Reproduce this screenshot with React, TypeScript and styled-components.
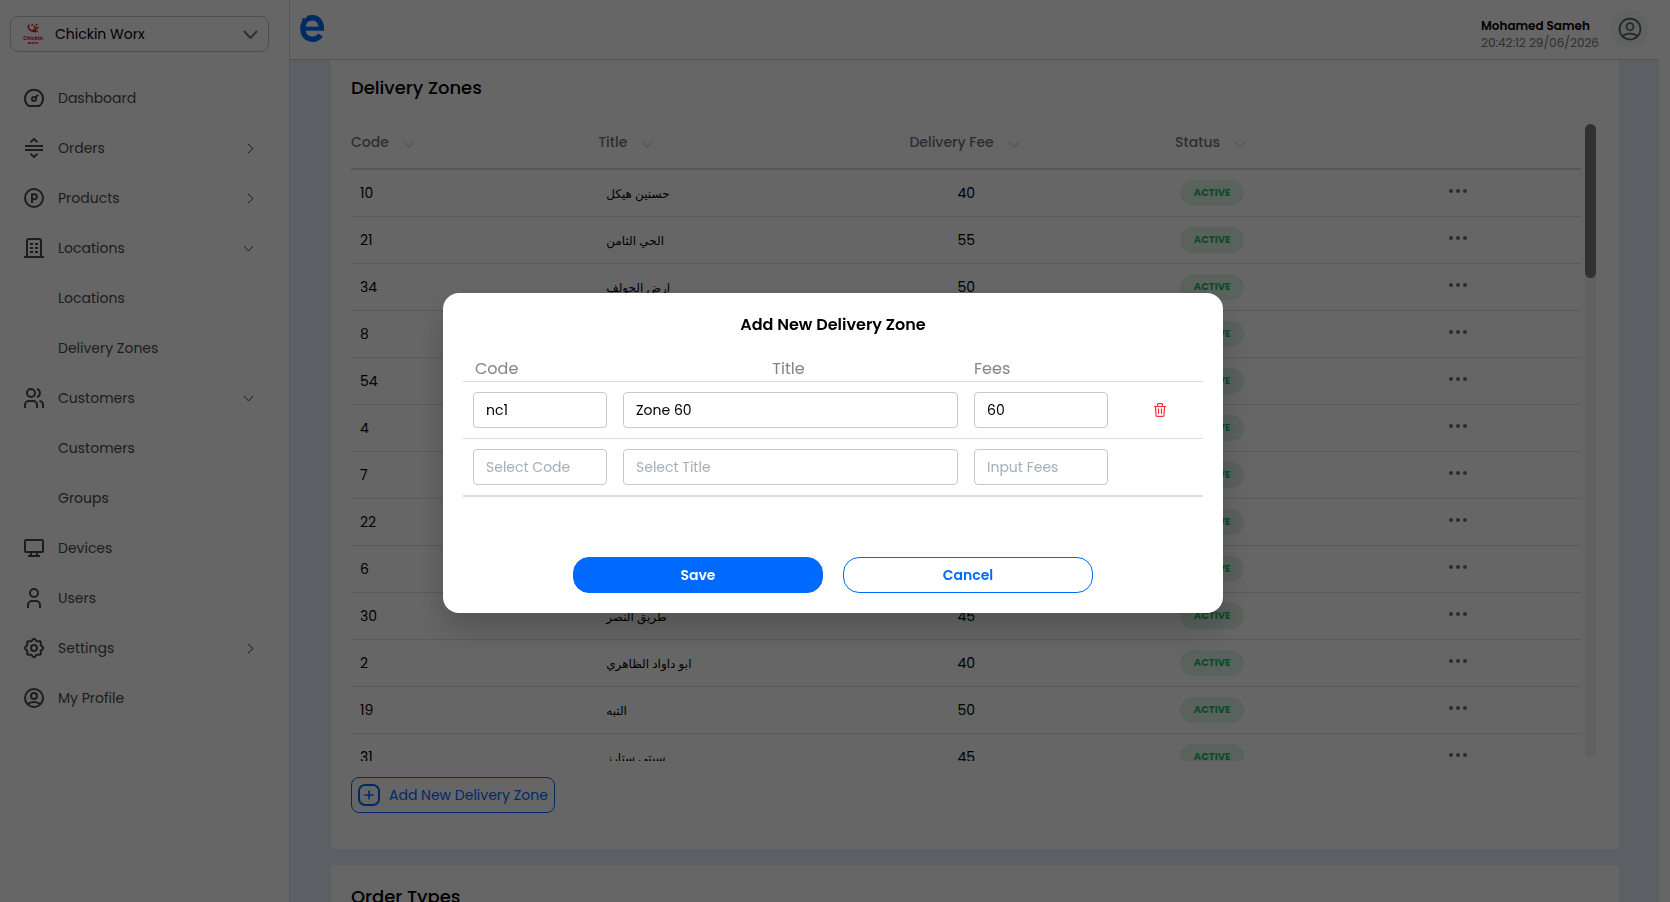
import React from "react";
import styled, { createGlobalStyle, css } from "styled-components";

const GlobalStyle = createGlobalStyle`
  *, *::before, *::after { box-sizing: border-box; }
  body {
    margin: 0;
    background: #fff;
    color: #000;
    font-family: Poppins, Inter, "DejaVu Sans", sans-serif;
    font-size: 14px;
    line-height: 24px;
  }
  button, input { font: inherit; color: inherit; }
  button { cursor: pointer; background: none; border: 0; padding: 0; }
  h1, h2, p, ul { margin: 0; padding: 0; }
`;

/* ---------- shell ---------- */

const Shell = styled.div`
  display: flex;
  height: 100vh;
  overflow: hidden;
`;

const Sidebar = styled.aside`
  flex: 0 0 290px;
  border-right: 1px solid #d0d5dc;
  padding: 16px 20px 0 10px;
`;

const StoreButton = styled.button`
  display: flex;
  align-items: center;
  width: 100%;
  height: 36px;
  padding: 0 10px 0 12px;
  border: 1px solid #c0c6d0;
  border-radius: 8px;
  text-align: left;
`;

const StoreName = styled.span`
  flex: 1;
  margin-left: 12px;
`;

const NavList = styled.ul`
  list-style: none;
  margin-top: 21px;
`;

const NavLink = styled.a`
  display: flex;
  align-items: center;
  height: 50px;
  padding: 0 15px 0 12px;
  color: #4a4a4a;
  text-decoration: none;
`;

const NavIcon = styled.span`
  display: flex;
  width: 24px;
  height: 24px;
  margin-right: 12px;
`;

const NavText = styled.span`
  flex: 1;
`;

const Main = styled.div`
  flex: 1;
  display: flex;
  flex-direction: column;
  min-width: 0;
  margin-right: 11px;
`;

const TopBar = styled.header`
  display: flex;
  flex: 0 0 60px;
  align-items: flex-start;
  padding: 10px 10px 0 8px;
  border-bottom: 1px solid #c8d0d4;
`;

const Brand = styled.a`
  flex: 1;
  display: flex;
  margin-top: 3px;
`;

const UserInfo = styled.div`
  width: 120px;
  margin: 7px 10px 0 0;
  font-size: 12px;
  white-space: nowrap;
`;

const UserName = styled.p`
  font-weight: 600;
  line-height: 18px;
`;

const Clock = styled.p`
  color: #6f767f;
  line-height: 16px;
`;

const Avatar = styled.button`
  display: flex;
  align-items: center;
  justify-content: center;
  width: 38px;
  height: 38px;
  border-radius: 50%;
  background: #f2f5f5;
  color: #5a6070;
`;

const Content = styled.main`
  flex: 1;
  min-height: 0;
  overflow: hidden;
  padding: 0 40px 0 41px;
  background: #e6eef8;
`;

const Card = styled.section<{ $joined?: boolean }>`
  padding: ${(p) => (p.$joined ? 16 : 20)}px 20px 35px;
  margin-bottom: 16px;
  background: #fff;
  border-radius: ${(p) => (p.$joined ? "0 0 4px 4px" : "4px")};
`;

const CardTitle = styled.h2`
  font-size: 18px;
  font-weight: 500;
  line-height: 24px;
`;

/* ---------- zones table ---------- */

const TableArea = styled.div`
  display: flex;
  gap: 4px;
  height: 645px;
  margin-top: 16px;
`;

const TableViewport = styled.div`
  flex: 1;
  overflow: hidden;
`;

const ScrollTrack = styled.div`
  width: 11px;
  height: 634px;
  margin: 8px 3px 0 0;
  border-radius: 6px;
  background: #f0f0f0;
`;

const ScrollThumb = styled.div`
  height: 154px;
  border-radius: 6px;
  background: #7a7a7a;
`;

const ZoneTable = styled.table`
  width: 100%;
  table-layout: fixed;
  border-collapse: separate;
  border-spacing: 0;
`;

const ZoneHead = styled.th<{ $width: string }>`
  width: ${(p) => p.$width};
  height: 54px;
  padding: 0;
  border-bottom: 2px solid #ccdcdc;
  color: #6c757d;
  font-weight: 500;
  text-align: left;
  white-space: nowrap;
`;

const SortButton = styled.button`
  display: inline-flex;
  align-items: center;
  gap: 14px;
  svg { margin-top: 4px; }
`;

const ZoneCell = styled.td<{ $indent: number }>`
  height: 47px;
  padding: 0 0 0 ${(p) => p.$indent}px;
  border-bottom: 1px solid #dadfe2;
  white-space: nowrap;
`;

const ArabicTitle = styled.span`
  font-size: 12px;
`;

const Badge = styled.span`
  display: block;
  width: 64px;
  height: 26px;
  margin-bottom: 1px;
  border-radius: 13px;
  background: #e2f5ea;
  color: #1fb95c;
  font-size: 10px;
  font-weight: 700;
  line-height: 26px;
  text-align: center;
`;

const MoreButton = styled.button`
  display: flex;
  margin: 0 auto;
  padding-bottom: 4px;
  color: #69737c;
`;

const AddButton = styled.button`
  display: inline-flex;
  align-items: center;
  gap: 8px;
  height: 36px;
  margin-top: 16px;
  padding: 0 6px 0 5px;
  border: 1px solid #006aff;
  border-radius: 8px;
  color: #006aff;
`;

/* ---------- dialog ---------- */

const Overlay = styled.div`
  position: fixed;
  inset: 0;
  display: flex;
  align-items: center;
  justify-content: center;
  padding: 4px 4px 0 0;
  background: rgba(0, 0, 0, 0.6);
`;

const Dialog = styled.form`
  width: 780px;
  padding: 20px;
  border-radius: 16px;
  background: #fff;
  box-shadow: 0 16px 32px rgba(0, 0, 0, 0.2);
`;

const DialogTitle = styled.h1`
  font-size: 16px;
  font-weight: 600;
  line-height: 24px;
  text-align: center;
`;

const EntryTable = styled.table`
  width: 100%;
  margin-top: 18px;
  table-layout: fixed;
  border-collapse: separate;
  border-spacing: 0;
`;

const EntryHead = styled.th<{ $width?: number; $first?: boolean; $center?: boolean }>`
  ${(p) => p.$width && css`width: ${p.$width}px;`}
  height: 27px;
  padding: 2px 12px 0 ${(p) => (p.$first ? 12 : 8)}px;
  border-bottom: 1px solid #d8dde2;
  color: #858585;
  font-size: 16px;
  font-weight: 400;
  line-height: 24px;
  text-align: ${(p) => (p.$center ? "center" : "left")};
`;

const EntryCell = styled.td<{ $last?: boolean; $first?: boolean }>`
  padding: 10px 8px 10px ${(p) => (p.$first ? 10 : 8)}px;
  border-bottom: ${(p) => (p.$last ? 2 : 1)}px solid #d8dfe5;
`;

const Field = styled.input`
  display: block;
  width: 100%;
  height: 36px;
  padding: 0 12px;
  border: 1px solid #c3cbd2;
  border-radius: 4px;
  background: #fff;
  outline: 0;
  &::placeholder { color: #a5afb8; opacity: 1; }
`;

const DeleteButton = styled.button`
  display: flex;
  margin: 0 auto;
`;

const Actions = styled.div`
  display: flex;
  justify-content: center;
  gap: 20px;
  margin-top: 60px;
`;

const ActionButton = styled.button<{ $primary?: boolean }>`
  width: 250px;
  height: 36px;
  border: 1px solid #006aff;
  border-radius: 16px;
  background: ${(p) => (p.$primary ? "#006aff" : "#fff")};
  color: ${(p) => (p.$primary ? "#fff" : "#006aff")};
  font-weight: 600;
`;

/* ---------- icons ---------- */

const Line = ({ children, size = 24, width = 2 }: { children: React.ReactNode; size?: number; width?: number }) => (
  <svg width={size} height={size} viewBox="0 0 24 24" fill="none" stroke="currentColor" strokeWidth={width} aria-hidden="true">
    {children}
  </svg>
);

const DashboardIcon = () => (
  <Line>
    <path d="M6.700 20A9 9 0 1 1 17.300 20Z" />
    <circle cx="12" cy="13" r="2" />
    <path d="M13.400 11.600l2.800-2.800" />
  </Line>
);

const ProductsIcon = () => (
  <Line>
    <circle cx="12" cy="12" r="9" />
    <path d="M10 17V8.200h2.400a2.500 2.500 0 0 1 0 5H10" />
  </Line>
);

const OrdersIcon = () => (
  <Line><path d="M3 10h18M3 14h18M8.500 6.200 12 3l3.500 3.200M8.500 17.800 12 21l3.500-3.200" /></Line>
);

const BuildingIcon = () => (
  <Line>
    <path d="M5 21V5a2 2 0 0 1 2-2h10a2 2 0 0 1 2 2v16M2 21h20" />
    <path d="M8 8h3M13 8h3M8 12h3M13 12h3M8 16h3M13 16h3" />
  </Line>
);

const GroupIcon = () => (
  <Line>
    <circle cx="9" cy="7" r="4" />
    <path d="M3 22v-3a4 4 0 0 1 4-4h4a4 4 0 0 1 4 4v3M15 3a4.200 4.200 0 0 1 0 8M17.500 15a4 4 0 0 1 3.500 4v3" />
  </Line>
);

const MonitorIcon = () => (
  <Line><path d="M4 4h16a1 1 0 0 1 1 1v10a1 1 0 0 1-1 1H4a1 1 0 0 1-1-1V5a1 1 0 0 1 1-1zM9 16v4M15 16v4M6 20h12" /></Line>
);

const PersonIcon = () => (
  <Line>
    <circle cx="12" cy="7" r="4" />
    <path d="M6 22v-3a4 4 0 0 1 4-4h4a4 4 0 0 1 4 4v3" />
  </Line>
);

const gearPath =
  Array.from({ length: 96 }, (_, i) => {
    const a = (i / 96) * Math.PI * 2;
    const r = 8.2 + 0.9 * Math.cos(8 * a);
    return `${i ? "L" : "M"}${(12 + r * Math.cos(a)).toFixed(2)} ${(12 + r * Math.sin(a)).toFixed(2)}`;
  }).join("") + "Z";

const GearIcon = () => (
  <Line>
    <path d={gearPath} />
    <circle cx="12" cy="12" r="3" />
  </Line>
);

const ProfileIcon = ({ size, width }: { size?: number; width?: number }) => (
  <Line size={size} width={width}>
    <circle cx="12" cy="12" r="9" />
    <circle cx="12" cy="10" r="3" />
    <path d="M5.500 18.300C7.200 16.600 9.400 16 12 16s4.800.6 6.500 2.300" />
  </Line>
);

const Chevron = ({ w, h, width, color }: { w: number; h: number; width: number; color: string }) => (
  <svg width={w + 2} height={h + 2} viewBox={`-1 -1 ${w + 2} ${h + 2}`} fill="none" stroke={color} strokeWidth={width} aria-hidden="true">
    <path d={w > h ? `M0 0 ${w / 2} ${h} ${w} 0` : `M0 0 ${w} ${h / 2} 0 ${h}`} />
  </svg>
);

const BrandLogo = () => (
  <svg width="28" height="30" viewBox="0 0 28 30" fill="none" stroke="#006aff" aria-hidden="true">
    <path d="M23.300 17C23.800 9 20 4.700 14.200 4.700S4.900 9 4.900 15.500 8.700 26.200 14.500 26.200c3.600 0 6.200-1.300 8-4.200" strokeWidth="5.400" />
    <path d="M6 15.700h20" strokeWidth="4" />
    <path d="M2 2l7.500 1.200L4 8.500z" fill="#fff" stroke="none" />
    <circle cx="5.500" cy="6.500" r="1.500" fill="#006aff" stroke="none" />
  </svg>
);

const StoreLogo = () => (
  <svg width="20" height="22" viewBox="0 0 20 22" aria-hidden="true">
    <path d="M6 1.500c-1.500 3 0 5 2 6S13.500 9.500 14.500 7.500M8.500 2.500 10 1M11 3l2 3 2.500-2M10 6.500l3 1.500M13.500 1v2" stroke="#e0162f" strokeWidth="1.500" fill="none" />
    <text x="10" y="17" textAnchor="middle" fontSize="5" fontWeight="700" fill="#e0162f">Chickin</text>
    <text x="10" y="21" textAnchor="middle" fontSize="4" fontWeight="700" fill="#e0162f">Worx</text>
  </svg>
);

const PlusSquareIcon = () => (
  <svg width="24" height="24" viewBox="0 0 24 24" fill="none" stroke="currentColor" aria-hidden="true">
    <rect x="2" y="2" width="20" height="20" rx="6" strokeWidth="2" />
    <path d="M12 7.500v9M7.500 12h9" strokeWidth="1.500" />
  </svg>
);

const DotsIcon = () => (
  <svg width="18" height="4" viewBox="0 0 18 4" fill="currentColor" aria-hidden="true">
    <circle cx="2" cy="2" r="2" /><circle cx="9" cy="2" r="2" /><circle cx="16" cy="2" r="2" />
  </svg>
);

const TrashIcon = () => (
  <svg width="12" height="14" viewBox="0 0 12 14" fill="none" stroke="#fb2f3a" strokeWidth="1.200" aria-hidden="true">
    <path d="M0 3.500h12M3.500 3V1.500q0-.8.8-.8h3.400q.8 0 .8.800V3M1.500 3.500 2 12.400q.1.900 1 .9h6q.9 0 1-.9l.5-8.900M4.500 5.500v5.500M7.500 5.500v5.500" />
  </svg>
);

/* ---------- data ---------- */

type NavEntry = { label: string; icon?: React.ReactNode; arrow?: "right" | "down" };

const nav: NavEntry[] = [
  { label: "Dashboard", icon: <DashboardIcon /> },
  { label: "Orders", icon: <OrdersIcon />, arrow: "right" },
  { label: "Products", icon: <ProductsIcon />, arrow: "right" },
  { label: "Locations", icon: <BuildingIcon />, arrow: "down" },
  { label: "Locations" },
  { label: "Delivery Zones" },
  { label: "Customers", icon: <GroupIcon />, arrow: "down" },
  { label: "Customers" },
  { label: "Groups" },
  { label: "Devices", icon: <MonitorIcon /> },
  { label: "Users", icon: <PersonIcon /> },
  { label: "Settings", icon: <GearIcon />, arrow: "right" },
  { label: "My Profile", icon: <ProfileIcon /> },
];

const columns = [
  { label: "Code", width: "20.1%" },
  { label: "Title", width: "25.3%" },
  { label: "Delivery Fee", width: "21.6%" },
  { label: "Status", width: "13%" },
];

const zones: [string, string, string][] = [
  ["10", "حسنين هيكل", "40"],
  ["21", "الحي الثامن", "55"],
  ["34", "ارض الجولف", "50"],
  ["8", "", ""],
  ["54", "", ""],
  ["4", "", ""],
  ["7", "", ""],
  ["22", "", ""],
  ["6", "", ""],
  ["30", "طريق النصر", "45"],
  ["2", "ابو داواد الظاهري", "40"],
  ["19", "التبه", "50"],
  ["31", "سيتي ستارز", "45"],
];

export default function App() {
  return (
    <>
      <GlobalStyle />
      <Shell>
        <Sidebar>
          <StoreButton type="button">
            <StoreLogo />
            <StoreName>Chickin Worx</StoreName>
            <Chevron w={13} h={7} width={2} color="#6c757d" />
          </StoreButton>
          <nav>
            <NavList>
              {nav.map((item, i) => (
                <li key={i}>
                  <NavLink href="#">
                    <NavIcon>{item.icon}</NavIcon>
                    <NavText>{item.label}</NavText>
                    {item.arrow === "right" && <Chevron w={5} h={9} width={1} color="#4a4a4a" />}
                    {item.arrow === "down" && <Chevron w={9} h={5} width={1} color="#4a4a4a" />}
                  </NavLink>
                </li>
              ))}
            </NavList>
          </nav>
        </Sidebar>
        <Main>
          <TopBar>
            <Brand href="#" aria-label="Home"><BrandLogo /></Brand>
            <UserInfo>
              <UserName>Mohamed Sameh</UserName>
              <Clock>20:42:12 29/06/2026</Clock>
            </UserInfo>
            <Avatar type="button" aria-label="Account"><ProfileIcon size={28} width={1.5} /></Avatar>
          </TopBar>
          <Content>
            <Card $joined>
              <CardTitle>Delivery Zones</CardTitle>
              <TableArea>
                <TableViewport>
                  <ZoneTable>
                    <thead>
                      <tr>
                        {columns.map((c) => (
                          <ZoneHead key={c.label} $width={c.width}>
                            <SortButton type="button">
                              {c.label}
                              <Chevron w={10} h={5} width={2} color="#dde1e4" />
                            </SortButton>
                          </ZoneHead>
                        ))}
                        <ZoneHead $width="20%" />
                      </tr>
                    </thead>
                    <tbody>
                      {zones.map(([code, title, fee]) => (
                        <tr key={code}>
                          <ZoneCell $indent={9}>{code}</ZoneCell>
                          <ZoneCell $indent={8}><ArabicTitle>{title}</ArabicTitle></ZoneCell>
                          <ZoneCell $indent={48}>{fee}</ZoneCell>
                          <ZoneCell $indent={5}><Badge>ACTIVE</Badge></ZoneCell>
                          <ZoneCell $indent={0}>
                            <MoreButton type="button" aria-label="More"><DotsIcon /></MoreButton>
                          </ZoneCell>
                        </tr>
                      ))}
                    </tbody>
                  </ZoneTable>
                </TableViewport>
                <ScrollTrack><ScrollThumb /></ScrollTrack>
              </TableArea>
              <AddButton type="button"><PlusSquareIcon />Add New Delivery Zone</AddButton>
            </Card>
            <Card>
              <CardTitle>Order Types</CardTitle>
            </Card>
          </Content>
        </Main>
      </Shell>
      <Overlay>
        <Dialog role="dialog" aria-labelledby="dialog-title" onSubmit={(e) => e.preventDefault()}>
          <DialogTitle id="dialog-title">Add New Delivery Zone</DialogTitle>
          <EntryTable>
            <thead>
              <tr>
                <EntryHead $width={152} $first>Code</EntryHead>
                <EntryHead $center>Title</EntryHead>
                <EntryHead $width={150}>Fees</EntryHead>
                <EntryHead $width={87} />
              </tr>
            </thead>
            <tbody>
              <tr>
                <EntryCell $first><Field aria-label="Code" defaultValue="nc1" /></EntryCell>
                <EntryCell><Field aria-label="Title" defaultValue="Zone 60" /></EntryCell>
                <EntryCell><Field aria-label="Fees" defaultValue="60" /></EntryCell>
                <EntryCell>
                  <DeleteButton type="button" aria-label="Delete row"><TrashIcon /></DeleteButton>
                </EntryCell>
              </tr>
              <tr>
                <EntryCell $first $last><Field aria-label="New code" placeholder="Select Code" /></EntryCell>
                <EntryCell $last><Field aria-label="New title" placeholder="Select Title" /></EntryCell>
                <EntryCell $last><Field aria-label="New fees" placeholder="Input Fees" /></EntryCell>
                <EntryCell $last />
              </tr>
            </tbody>
          </EntryTable>
          <Actions>
            <ActionButton type="submit" $primary>Save</ActionButton>
            <ActionButton type="button">Cancel</ActionButton>
          </Actions>
        </Dialog>
      </Overlay>
    </>
  );
}
